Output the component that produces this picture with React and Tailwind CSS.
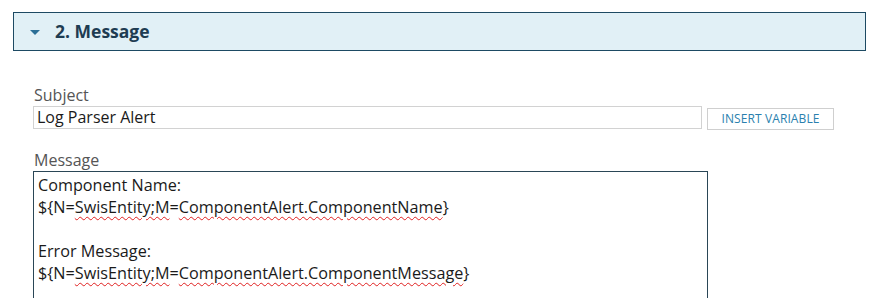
// App.jsx - alert action editor, "Message" step
import React from 'react';

// red spell-check squiggle under a word
function Sq({ children }) {
  return (
    <span className="underline decoration-wavy decoration-[#e02020] decoration-1 underline-offset-[3px]">
      {children}
    </span>
  );
}

export default function App() {
  return (
    <div className="w-[872px] h-[298px] overflow-hidden bg-white font-['Open_Sans',sans-serif] pt-[12px]">
      {/* Section header */}
      <div className="ml-[13px] w-[853px] h-[39px] border border-[#1d4a63] bg-[#e1f0f6] flex items-center pl-[16px]">
        <svg width="10" height="5" viewBox="0 0 10 5" className="mt-[1px]">
          <polygon points="0,0 10,0 5,5" fill="#2b6f96" />
        </svg>
        <span className="ml-[15px] text-[17.5px] font-bold text-[#1e3c52] leading-none">2. Message</span>
      </div>

      <div className="pl-[33px] pt-[34px]">
        {/* Subject */}
        <div className="text-[16px] leading-[20px] text-[#555] pl-[1px] mb-[1px]">Subject</div>
        <div className="flex items-start gap-[5px]">
          <div className="w-[669px] h-[23px] border border-[#d2d2d2] pl-[3px] text-[16px] leading-[21px] text-[#1a1a1a]">
            Log Parser Alert
          </div>
          <button className="mt-[2px] w-[127px] h-[22px] border border-[#cfcfcf] bg-white text-[12px] leading-[20px] text-[#2a7fae] tracking-[0.1px]">
            INSERT VARIABLE
          </button>
        </div>

        {/* Message */}
        <div className="mt-[20px] text-[16px] leading-[20px] text-[#555] pl-[1px] mb-[1px]">Message</div>
        <div className="w-[675px] h-[140px] border border-[#2a4656] pl-[4px] pt-[2px] text-[16.2px] leading-[22px] text-[#1a1a1a]">
          <div>Component Name:</div>
          <div>
            ${'{'}N=<Sq>SwisEntity;M</Sq>=<Sq>ComponentAlert.ComponentName</Sq>{'}'}
          </div>
          <div>&nbsp;</div>
          <div>Error Message:</div>
          <div>
            ${'{'}N=<Sq>SwisEntity;M</Sq>=<Sq>ComponentAlert.ComponentMessage</Sq>{'}'}
          </div>
        </div>
      </div>
    </div>
  );
}
